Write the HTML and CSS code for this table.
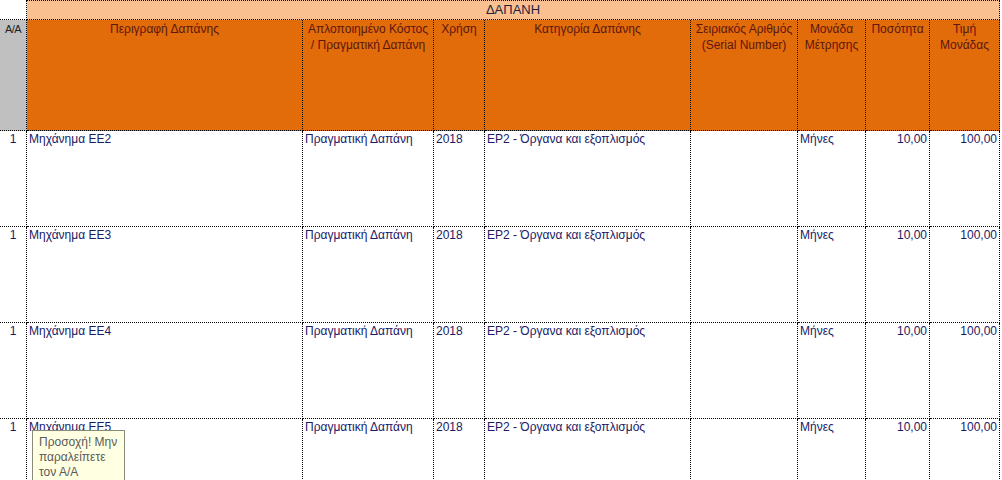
FILE: index.html
```html
<!DOCTYPE html>
<html lang="el">
<head>
<meta charset="utf-8">
<title>ΔΑΠΑΝΗ</title>
<link rel="stylesheet" href="styles.css">
</head>
<body>
<div class="sheet">
  <div class="grid">
    <div class="c corner"></div>
    <div class="c title">ΔΑΠΑΝΗ</div>

    <div class="c hd aa">A/A</div>
    <div class="c hd">Περιγραφή Δαπάνης</div>
    <div class="c hd">Απλοποιημένο Κόστος<br>/ Πραγματική Δαπάνη</div>
    <div class="c hd">Χρήση</div>
    <div class="c hd">Κατηγορία Δαπάνης</div>
    <div class="c hd">Σειριακός Αριθμός<br>(Serial Number)</div>
    <div class="c hd">Μονάδα<br>Μέτρησης</div>
    <div class="c hd">Ποσότητα</div>
    <div class="c hd">Τιμή<br>Μονάδας</div>

    <div class="c d ctr">1</div>
    <div class="c d">Μηχάνημα ΕΕ2</div>
    <div class="c d">Πραγματική Δαπάνη</div>
    <div class="c d">2018</div>
    <div class="c d">ΕΡ2 - Όργανα και εξοπλισμός</div>
    <div class="c d"></div>
    <div class="c d">Μήνες</div>
    <div class="c d num">10,00</div>
    <div class="c d num">100,00</div>

    <div class="c d ctr">1</div>
    <div class="c d">Μηχάνημα ΕΕ3</div>
    <div class="c d">Πραγματική Δαπάνη</div>
    <div class="c d">2018</div>
    <div class="c d">ΕΡ2 - Όργανα και εξοπλισμός</div>
    <div class="c d"></div>
    <div class="c d">Μήνες</div>
    <div class="c d num">10,00</div>
    <div class="c d num">100,00</div>

    <div class="c d ctr">1</div>
    <div class="c d">Μηχάνημα ΕΕ4</div>
    <div class="c d">Πραγματική Δαπάνη</div>
    <div class="c d">2018</div>
    <div class="c d">ΕΡ2 - Όργανα και εξοπλισμός</div>
    <div class="c d"></div>
    <div class="c d">Μήνες</div>
    <div class="c d num">10,00</div>
    <div class="c d num">100,00</div>

    <div class="c d ctr">1</div>
    <div class="c d">Μηχάνημα ΕΕ5</div>
    <div class="c d">Πραγματική Δαπάνη</div>
    <div class="c d">2018</div>
    <div class="c d">ΕΡ2 - Όργανα και εξοπλισμός</div>
    <div class="c d"></div>
    <div class="c d">Μήνες</div>
    <div class="c d num">10,00</div>
    <div class="c d num">100,00</div>
  </div>
  <div class="tip">Προσοχή! Μην<br>παραλείπετε<br>τον Α/Α</div>
</div>
</body>
</html>
```

FILE: styles.css
```css
html, body {
  margin: 0;
  padding: 0;
  background: #ffffff;
  overflow: hidden;
}

.sheet {
  position: relative;
  width: 1002px;
  height: 480px;
  overflow: hidden;
  font-family: "Liberation Sans", Arial, sans-serif;
  font-size: 12px;
}

.grid {
  display: grid;
  grid-template-columns: 27px 276px 131px 51px 206px 107px 68px 64px 70px;
  grid-template-rows: 20px 111px 96px 96px 96px 96px;
}

.c {
  box-sizing: border-box;
  border-right: 1px dotted #000;
  border-bottom: 1px dotted #000;
  overflow: hidden;
  white-space: nowrap;
}

.corner {
  background: #ffffff;
}

.title {
  grid-column: 2 / 10;
  background: #fac090;
  border-top: 1px dotted #000;
  text-align: center;
  color: #1f1f3f;
  font-size: 13px;
  line-height: 17px;
}

.hd {
  background: #e26b0a;
  color: #5a1810;
  text-align: center;
  line-height: 16px;
  padding-top: 1px;
}

.hd.aa {
  background: #c0c0c0;
  color: #1f1f1f;
  font-size: 11px;
  letter-spacing: -0.5px;
}

.d {
  background: #ffffff;
  color: #1a1a66;
  line-height: 14px;
  padding: 1px 3px 0 2px;
}

.d.ctr {
  text-align: center;
  padding-left: 0;
  padding-right: 0;
}

.d.num {
  text-align: right;
  padding-right: 2px;
}

.tip {
  position: absolute;
  left: 32px;
  top: 430px;
  width: 93px;
  height: 60px;
  box-sizing: border-box;
  background: #ffffe1;
  border: 1px solid #8a8a7a;
  color: #5a5a5a;
  line-height: 15px;
  padding: 4px 0 0 6px;
  white-space: nowrap;
}
```
